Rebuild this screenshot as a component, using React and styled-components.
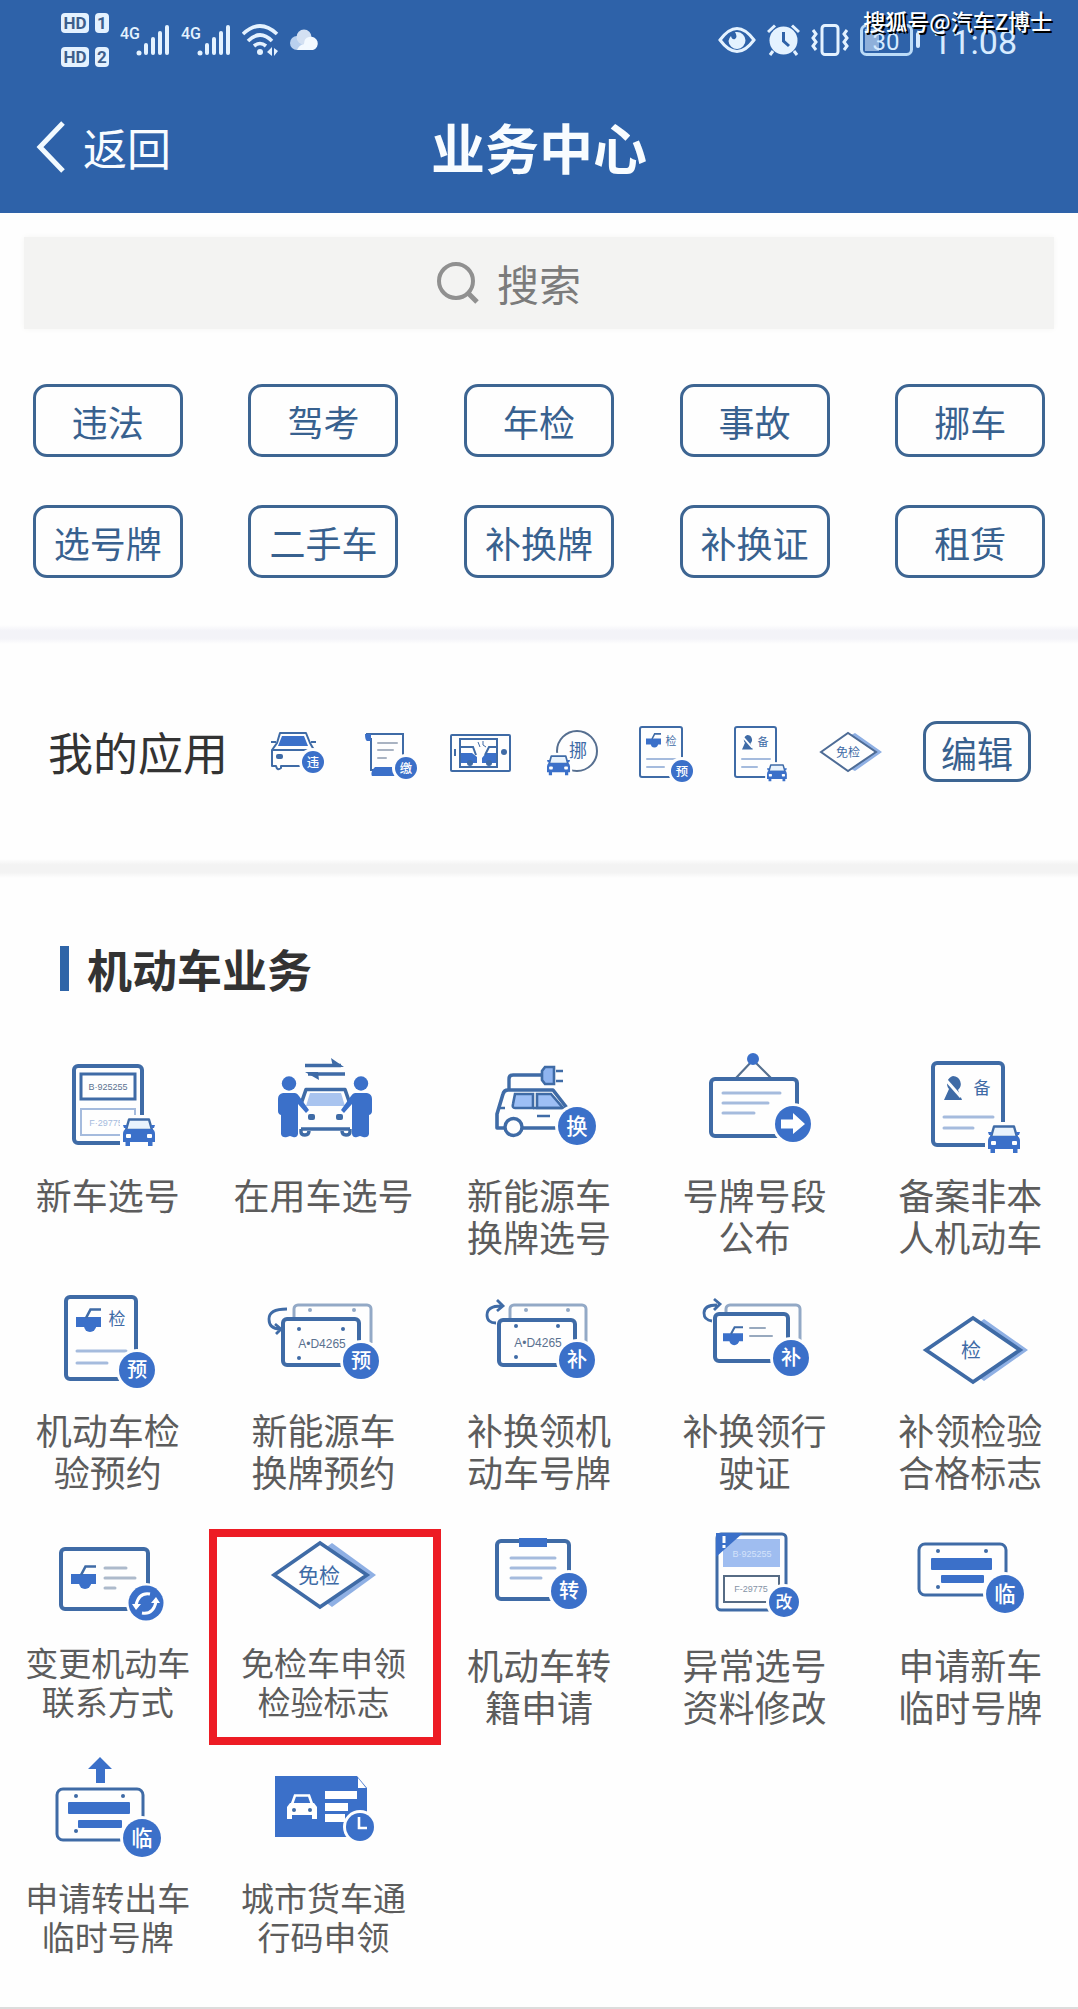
import React, { useState } from 'react'
import styled, { createGlobalStyle } from 'styled-components'

const BLUE = '#3b70c9'
const LINE = '#3f6ba6'
const PALE = '#a5bbdd'

/* ---------- small drawings shared by the icons ---------- */

// round badge with one character in it
function Badge({ x, y, r = 18, children }) {
  return (
    <g>
      <circle cx={x} cy={y} r={r + 3} fill="#fefefe" />
      <circle cx={x} cy={y} r={r} fill={BLUE} />
      <text x={x} y={y + r * 0.41} fontSize={r * 1.12} fontWeight="500" fill="#fff" textAnchor="middle">
        {children}
      </text>
    </g>
  )
}

// front of a car, 32 x 28
function Car({ x, y, s = 1 }) {
  return (
    <g transform={`translate(${x} ${y}) scale(${s})`}>
      <path d="M-3 -3H35V30H-3z" fill="#fefefe" />
      <path d="M6 1.5H26L29 12H3z" fill="#e9f3fd" stroke={LINE} strokeWidth="2.4" strokeLinejoin="round" />
      <path d="M3 11H29Q32 12 32 16V24H29.5V28H25V24H7V28H2.5V24H0V16Q0 12 3 11z" fill={BLUE} />
      <path d="M0 7H4V10H1zM32 7H28V10H31z" fill={BLUE} />
      <rect x="3" y="16" width="5" height="4" rx="1" fill="#fff" />
      <rect x="24" y="16" width="5" height="4" rx="1" fill="#fff" />
    </g>
  )
}

// half of a car seen from the side, 25 x 24
function HalfCar({ x, y, s = 1 }) {
  return (
    <g transform={`translate(${x} ${y}) scale(${s})`} fill={BLUE}>
      <path d="M0 9H25V19H20A6 6 0 0 1 9 19H0z" />
      <circle cx="14" cy="18" r="6" />
      <path d="M10 10L14.5 1.5H25" fill="none" stroke={LINE} strokeWidth="2.6" />
    </g>
  )
}

// person with a diagonal cut, 18 x 24
function Person({ x, y, s = 1 }) {
  return (
    <g transform={`translate(${x} ${y}) scale(${s})`}>
      <path d="M9 0A8 8 0 0 1 14 14L18 24H0L5 13A8 8 0 0 1 9 0z" fill={LINE} />
      <path d="M2 4L17 21" stroke="#fefefe" strokeWidth="3" />
    </g>
  )
}

function Lines({ x, rows, w = 3, color = PALE }) {
  return rows.map(([y, end]) => (
    <path key={y} d={`M${x} ${y}H${end}`} stroke={color} strokeWidth={w} strokeLinecap="round" />
  ))
}

function Frame({ x, y, w, h, color = LINE, sw = 4, rx = 4 }) {
  return <rect x={x} y={y} width={w} height={h} rx={rx} fill="#fefefe" stroke={color} strokeWidth={sw} />
}

function Dots({ points, color = LINE }) {
  return points.map(([x, y]) => <circle key={`${x}-${y}`} cx={x} cy={y} r="2" fill={color} />)
}

function Mark({ x, y, size, weight = 400, fill = LINE, children }) {
  return (
    <text x={x} y={y} fontSize={size} fontWeight={weight} fill={fill} textAnchor="middle">
      {children}
    </text>
  )
}

// number on a licence plate
function PlateNo({ x, y, size = 9, fill = '#5b7290', children }) {
  return (
    <text x={x} y={y} fontSize={size} fontFamily="'Liberation Sans', sans-serif" fill={fill} textAnchor="middle">
      {children}
    </text>
  )
}

/* ---------- service icons, 120 x 112 ---------- */

const NewPlate = () => (
  <>
    <Frame x={26} y={18} w={68} h={77} />
    <Frame x={33} y={26} w={54} h={25} sw={3} rx={0} />
    <PlateNo x={60} y={42}>B·925255</PlateNo>
    <Frame x={33} y={61} w={54} h={26} sw={2} rx={0} color={PALE} />
    <PlateNo x={58} y={78} fill={PALE}>F·29775</PlateNo>
    <Car x={75} y={70} />
  </>
)

const SwapPlate = () => (
  <>
    <path d="M42 17.5H78M82 26H45" stroke={LINE} strokeWidth="3.6" />
    <path d="M68 10L81 19H70zM56 32L42 24H55z" fill={LINE} />
    <path d="M38 56L43 41.5H82L87 56" fill="none" stroke={LINE} strokeWidth="3.6" strokeLinejoin="round" />
    <path d="M47 45H78L82 58H43z" fill="#a9c4ef" />
    <path d="M38 81H87" stroke={LINE} strokeWidth="3.6" />
    <path d="M38 81V84Q38 87 42 87T46 83M79 83Q79 87 83 87T87 84V81" fill="none" stroke={LINE} strokeWidth="3.4" />
    <rect x="45" y="66" width="7" height="6" rx="2" fill={LINE} />
    <rect x="73" y="66" width="7" height="6" rx="2" fill={LINE} />
    <g fill={BLUE}>
      <circle cx="26" cy="35.5" r="7.2" />
      <circle cx="98" cy="35.5" r="7.2" />
      <path d="M20 45H32Q34 45 36 48L46 62L43 65L35 56V86Q34 90 30 89L27 88L24 89Q19 90 18 86V67Q15 66 15 63V51Q15 46 20 45z" />
      <path d="M104 45H92Q90 45 88 48L78 62L81 65L89 56V86Q90 90 94 89L97 88L100 89Q105 90 106 86V67Q109 66 109 63V51Q109 46 104 45z" />
    </g>
  </>
)

const EnergyCar = () => (
  <>
    <path d="M30 42V31Q30 27 34 27H63" fill="none" stroke={LINE} strokeWidth="3.4" />
    <path d="M66 19H75V36H66L63 32V23z" fill="#8fb4f0" stroke={LINE} strokeWidth="2.6" />
    <path d="M77 23H84M77 33H84" stroke={LINE} strokeWidth="2.6" />
    <path d="M26 80H18V66L24 46Q25 42 29 42H74L88 60Q96 63 96 68V80H43" fill="#fefefe" stroke={LINE} strokeWidth="3.6" strokeLinejoin="round" />
    <path d="M36 46H54V60H36Q33 60 34 56z" fill="#9dbff5" stroke={LINE} strokeWidth="2.6" />
    <path d="M58 46H72L84 60H58z" fill="#9dbff5" stroke={LINE} strokeWidth="2.6" />
    <path d="M19 60H26M54 60H88M58 68H71" stroke={LINE} strokeWidth="2.6" />
    <circle cx="34.5" cy="79" r="8.5" fill="#fefefe" stroke={LINE} strokeWidth="3.4" />
    <Badge x={98} y={78} r={19}>换</Badge>
  </>
)

const Board = () => (
  <>
    <path d="M41 30L58 12L76 30" fill="none" stroke="#56708f" strokeWidth="2.2" />
    <circle cx="58" cy="11" r="6" fill={BLUE} />
    <Frame x={16} y={31} w={86} h={57} />
    <Lines x={28} rows={[[45, 85], [55, 73], [65, 59]]} />
    <circle cx="98" cy="76" r="21" fill="#fefefe" />
    <circle cx="98" cy="76" r="18" fill={BLUE} />
    <path d="M86 71.5H98V65L110 76L98 86V80.5H86z" fill="#fff" />
  </>
)

const Record = () => (
  <>
    <Frame x={23} y={15} w={70} h={82} />
    <Person x={34} y={28} />
    <Mark x={72} y={46} size={17}>备</Mark>
    <Lines x={34} rows={[[69, 83], [80, 63]]} />
    <Car x={78} y={77} />
  </>
)

const CheckBooking = () => (
  <>
    <Frame x={18} y={14} w={70} h={82} />
    <HalfCar x={28} y={25} />
    <Mark x={69} y={42} size={17}>检</Mark>
    <Lines x={29} rows={[[68, 78], [80, 59]]} />
    <Badge x={89} y={87}>预</Badge>
  </>
)

const EnergyBooking = () => (
  <>
    <Frame x={31} y={22} w={77} h={50} color="#93a9c6" sw={3} />
    <Dots points={[[47, 27], [91, 27]]} color="#93a9c6" />
    <path d="M24 26Q6 26 6 36Q6 46 17 46M12 41L18 46L13 51" fill="none" stroke={LINE} strokeWidth="2.8" />
    <Frame x={20} y={36} w={76} h={46} />
    <Dots points={[[36, 46], [80, 46], [36, 75]]} />
    <rect x="97" y="60" width="14" height="16" fill="#fefefe" />
    <Badge x={98} y={78}>预</Badge>
    <PlateNo x={59} y={65} size={12}>A•D4265</PlateNo>
  </>
)

const PlateRenew = () => (
  <>
    <Frame x={31} y={22} w={76} h={50} color="#93a9c6" sw={3} />
    <Dots points={[[47, 27], [89, 27]]} color="#93a9c6" />
    <path d="M17 40Q8 40 8 32Q8 23 22 23M18 17L24 23L18 28" fill="none" stroke={LINE} strokeWidth="2.8" />
    <Frame x={20} y={37} w={76} h={45} />
    <Dots points={[[37, 43], [79, 43], [37, 74]]} />
    <rect x="97" y="60" width="14" height="16" fill="#fefefe" />
    <Badge x={98} y={77}>补</Badge>
    <PlateNo x={59} y={64} size={12}>A•D4265</PlateNo>
  </>
)

const LicenseRenew = () => (
  <>
    <Frame x={31} y={22} w={74} h={48} color="#93a9c6" sw={3} />
    <path d="M17 38Q9 37 9 30Q9 22 22 22M19 16L25 21L19 27" fill="none" stroke={LINE} strokeWidth="2.8" />
    <Frame x={20} y={31} w={73} h={47} />
    <HalfCar x={28} y={43} s={0.8} />
    <Lines x={55} rows={[[45, 70], [53, 77]]} w={2} color="#98a9be" />
    <rect x="96" y="58" width="14" height="14" fill="#fefefe" />
    <Badge x={96} y={75}>补</Badge>
  </>
)

const CheckMark = () => (
  <>
    <path d="M74 36L118 67L74 98L66 92L102 67L66 42z" fill="#8fb0e4" />
    <path d="M16 67L63 35L110 67L63 99z" fill="#fefefe" stroke={LINE} strokeWidth="3.8" />
    <Mark x={61} y={75} size={20}>检</Mark>
  </>
)

const Contact = () => (
  <>
    <Frame x={13} y={31} w={87} h={60} />
    <HalfCar x={23} y={47} />
    <Lines x={57} rows={[[50, 78], [60, 87], [70, 67]]} color="#adbacb" />
    <circle cx="98" cy="85" r="20" fill="#fefefe" />
    <circle cx="98" cy="85" r="17.5" fill={BLUE} />
    <path d="M102 76Q91 74 88 87M94 95Q105 97 108 84" fill="none" stroke="#fff" strokeWidth="3" />
    <path d="M84 86H93L88 92zM103 85H112L108 79z" fill="#fff" />
  </>
)

const FreeCheck = () => (
  <>
    <path d="M69 25L113 57L69 89L61 83L96 57L61 31z" fill="#8fb0e4" />
    <path d="M11 57L57 25L104 57L57 89z" fill="#fefefe" stroke={LINE} strokeWidth="3.6" />
    <Mark x={56} y={65} size={21}>免检</Mark>
  </>
)

const Transfer = () => (
  <>
    <Frame x={18} y={23} w={72} h={58} />
    <rect x="40" y="20" width="28" height="9" fill={BLUE} />
    <Lines x={32} rows={[[40, 76], [50, 76], [60, 62]]} />
    <Badge x={90} y={73}>转</Badge>
  </>
)

const DataFix = () => (
  <>
    <Frame x={22} y={16} w={69} h={76} sw={3} />
    <rect x="28" y="21" width="57" height="28" fill="#9fbdf0" />
    <PlateNo x={57} y={39} fill="#d4e2fa">B·925255</PlateNo>
    <Frame x={29} y={58} w={55} h={26} sw={2} rx={0} color="#566b84" />
    <PlateNo x={56} y={74} fill="#8593a6">F-29775</PlateNo>
    <path d="M21 15H48L21 39z" fill={BLUE} />
    <path d="M29 18V25M29 27V30" stroke="#fff" strokeWidth="3" />
    <Badge x={89} y={84} r={15}>改</Badge>
  </>
)

const TempPlate = () => (
  <>
    <Frame x={9} y={26} w={87} h={51} sw={3} rx={6} />
    <Dots points={[[28, 33], [76, 33], [28, 69]]} />
    <rect x="21" y="40" width="61" height="12" rx="1" fill={BLUE} />
    <rect x="31" y="57" width="43" height="8" rx="1" fill={BLUE} />
    <Badge x={95} y={76} r={19}>临</Badge>
  </>
)

const TempOut = () => (
  <>
    <path d="M52 4L64 16H57V30H48V16H40z" fill={BLUE} />
    <Frame x={9} y={36} w={86} h={51} sw={3} rx={6} />
    <Dots points={[[28, 43], [75, 43], [28, 78]]} />
    <rect x="20" y="49" width="62" height="12" rx="1" fill={BLUE} />
    <rect x="30" y="67" width="44" height="8" rx="1" fill={BLUE} />
    <Badge x={94} y={85} r={19}>临</Badge>
  </>
)

const TruckPass = () => (
  <>
    <path d="M12 23H94L104 35V84H12z" fill={BLUE} />
    <path d="M95 25L103 35H95z" fill="#fff" />
    <path d="M29 51L32 42.5H46L49 51" fill="none" stroke="#fff" strokeWidth="2.6" />
    <path d="M27 50H51L54 54V66H49V62H29V66H24V54z" fill="#fff" />
    <circle cx="31" cy="57" r="2" fill={LINE} />
    <circle cx="47" cy="57" r="2" fill={LINE} />
    <path d="M62 38H94V46H62zM62 50H85V58H62zM62 61H82V69H62z" fill="#fff" />
    <circle cx="97" cy="74" r="17" fill="#fefefe" />
    <circle cx="97" cy="74" r="14" fill={BLUE} />
    <path d="M96 64V75H104" fill="none" stroke="#fff" strokeWidth="2.6" />
  </>
)

/* ---------- my apps icons, 60 x 60 ---------- */

const Violation = () => (
  <>
    <path d="M4 28L9 21L12 11H38L42 21L46 28V44H13V46Q9 49 8 44H4z" fill="#fefefe" stroke={LINE} strokeWidth="2" strokeLinejoin="round" />
    <path d="M14 14H36L40 24H10z" fill={BLUE} />
    <path d="M4 28H46M3 20H8M43 20H48" stroke={LINE} strokeWidth="2" />
    <rect x="8" y="32" width="7" height="5" rx="2" fill={LINE} />
    <Badge x={45} y={40} r={11}>违</Badge>
  </>
)

const Payment = () => (
  <>
    <path d="M6 12H43V48H11V16" fill="#fefefe" stroke={LINE} strokeWidth="2" />
    <path d="M5 12H11V19H7Q5 18 5 12zM12 54Q10 50 15 45H36V54z" fill={BLUE} />
    <Lines x={18} rows={[[21, 37], [28, 33], [36, 26]]} w={2} color="#a9b3c2" />
    <Badge x={46} y={46} r={11}>缴</Badge>
  </>
)

const Accident = () => (
  <>
    <Frame x={-1} y={13} w={59} h={36} sw={2} rx={1} />
    <Frame x={8} y={17} w={37} h={28} sw={2} rx={0} />
    <path d="M9 31H20L25 35V41H9zM44 31H34L30 36V41H44z" fill={BLUE} />
    <path d="M9 25H21L24 33M44 25H37L33 33" fill="none" stroke={LINE} strokeWidth="2" />
    <circle cx="18" cy="41" r="3" fill={LINE} />
    <circle cx="37" cy="41" r="3" fill={LINE} />
    <path d="M26 20L28 25M31 19V23L34 25" fill="none" stroke={LINE} strokeWidth="1" />
    <path d="M3 27V34" stroke={LINE} strokeWidth="2" />
    <circle cx="52" cy="30" r="3" fill={LINE} />
  </>
)

const MoveCar = () => (
  <>
    <circle cx="33" cy="29" r="20" fill="#fefefe" stroke="#566f90" strokeWidth="2" />
    <Car x={3} y={33} s={0.72} />
    <Mark x={34} y={35} size={18}>挪</Mark>
  </>
)

const CheckSmall = () => (
  <>
    <Frame x={4} y={5} w={42} h={50} sw={2} rx={2} />
    <HalfCar x={10} y={11} s={0.6} />
    <Mark x={35} y={23} size={11}>检</Mark>
    <Lines x={11} rows={[[37, 40], [45, 28]]} w={2} />
    <Badge x={46} y={49} r={11}>预</Badge>
  </>
)

const RecordSmall = () => (
  <>
    <Frame x={7} y={5} w={41} h={50} sw={2} rx={2} />
    <Person x={14} y={13} s={0.6} />
    <Mark x={35} y={24} size={11}>备</Mark>
    <Lines x={14} rows={[[37, 42], [45, 29]]} w={2} />
    <Car x={39} y={42} s={0.62} />
  </>
)

const FreeSmall = () => (
  <>
    <path d="M35 11L62 30L35 49L29 46L52 30L29 14z" fill="#8fb0e4" />
    <path d="M1 30L28 11L56 30L28 49z" fill="#fefefe" stroke="#4e6c96" strokeWidth="2" />
    <Mark x={28} y={35} size={12}>免检</Mark>
  </>
)

/* ---------- status bar icons ---------- */

const Signal = () => (
  <svg width="50" height="36" viewBox="0 0 50 36" fill="#e4f2ff">
    <text x="0" y="17" fontSize="16" fontFamily="Roboto, sans-serif" fontWeight="500">4G</text>
    <circle cx="19" cy="31" r="2.5" />
    <rect x="24" y="21" width="4" height="12" rx="2" />
    <rect x="31" y="15" width="4" height="18" rx="2" />
    <rect x="38" y="9" width="4" height="24" rx="2" />
    <rect x="45" y="3" width="4" height="30" rx="2" />
  </svg>
)

const Wifi = () => (
  <svg width="37" height="32" viewBox="0 0 37 32" fill="none" stroke="#e4f2ff" strokeWidth="3.6">
    <path d="M1 10Q18 -6 35 10M6 17Q18 5 30 17M12 22Q18 17 24 22" />
    <circle cx="18" cy="28" r="3" fill="#e4f2ff" stroke="none" />
    <path d="M25 28L30 23V32zM32 24V32L36 27z" fill="#e4f2ff" stroke="none" />
  </svg>
)

const Cloud = () => (
  <svg width="30" height="22" viewBox="0 0 30 22">
    <circle cx="7" cy="14" r="7" fill="#b9d0ee" />
    <circle cx="14" cy="8" r="7.5" fill="#d3e0f2" />
    <path d="M7 21H23A6.5 6.5 0 1 0 19 8Q14 9 14 15Q9 16 7 21z" fill="#f3f9ff" />
  </svg>
)

const Eye = () => (
  <svg width="38" height="28" viewBox="0 0 38 28">
    <path d="M2 14Q19 -9 36 14Q19 37 2 14z" fill="none" stroke="#e4f2ff" strokeWidth="3" />
    <path d="M19 6A8.5 8.5 0 1 1 10.5 15Q11 12 13 10Q14 14 17 13Q20 11 17 6z" fill="#e4f2ff" />
  </svg>
)

const Alarm = () => (
  <svg width="33" height="32" viewBox="0 0 33 32">
    <circle cx="16.5" cy="16.5" r="14" fill="#e4f2ff" />
    <path d="M1 8L8 1.5M32 8L25 1.5M6 27L3 31M27 27L30 31" stroke="#e4f2ff" strokeWidth="3" />
    <path d="M16.5 8V17L22 22" fill="none" stroke="#2f62a8" strokeWidth="3" />
  </svg>
)

const Vibrate = () => (
  <svg width="38" height="32" viewBox="0 0 38 32" fill="none" stroke="#e4f2ff" strokeWidth="3">
    <rect x="11" y="1.5" width="16" height="29" rx="3" />
    <path d="M2 6L5 10L2 14L5 18L2 22L5 26M36 6L33 10L36 14L33 18L36 22L33 26" />
  </svg>
)

const Battery = () => (
  <svg width="61" height="32" viewBox="0 0 61 32">
    <rect x="1.5" y="1.5" width="50" height="29" rx="5" fill="none" stroke="#bcdcf8" strokeWidth="3" />
    <rect x="5" y="5" width="14" height="22" fill="#8fb0da" />
    <rect x="56" y="8" width="4" height="16" rx="2" fill="#d7ebff" />
    <text x="26" y="26" fontSize="24" fontFamily="Roboto, sans-serif" fill="#d7ebff" textAnchor="middle">30</text>
  </svg>
)

/* ---------- data ---------- */

const tags = ['违法', '驾考', '年检', '事故', '挪车', '选号牌', '二手车', '补换牌', '补换证', '租赁']

const myApps = [
  { id: 'violation', Icon: Violation },
  { id: 'payment', Icon: Payment },
  { id: 'accident', Icon: Accident },
  { id: 'move', Icon: MoveCar },
  { id: 'check', Icon: CheckSmall },
  { id: 'record', Icon: RecordSmall },
  { id: 'free', Icon: FreeSmall },
]

const services = [
  { name: '新车选号', Icon: NewPlate },
  { name: '在用车选号', Icon: SwapPlate },
  { name: '新能源车\n换牌选号', Icon: EnergyCar },
  { name: '号牌号段\n公布', Icon: Board },
  { name: '备案非本\n人机动车', Icon: Record },
  { name: '机动车检\n验预约', Icon: CheckBooking },
  { name: '新能源车\n换牌预约', Icon: EnergyBooking },
  { name: '补换领机\n动车号牌', Icon: PlateRenew },
  { name: '补换领行\n驶证', Icon: LicenseRenew },
  { name: '补领检验\n合格标志', Icon: CheckMark },
  { name: '变更机动车\n联系方式', Icon: Contact, small: true },
  { name: '免检车申领\n检验标志', Icon: FreeCheck, small: true, marked: true },
  { name: '机动车转\n籍申请', Icon: Transfer },
  { name: '异常选号\n资料修改', Icon: DataFix },
  { name: '申请新车\n临时号牌', Icon: TempPlate },
  { name: '申请转出车\n临时号牌', Icon: TempOut, small: true },
  { name: '城市货车通\n行码申领', Icon: TruckPass, small: true },
]

export default function App() {
  const [keyword, setKeyword] = useState('')

  return (
    <Page>
      <Global />
      <Header>
        <StatusBar>
          <StatusGroup>
            <SimGrid>
              <SimBadge>HD</SimBadge>
              <SimBadge>1</SimBadge>
              <SimBadge>HD</SimBadge>
              <SimBadge>2</SimBadge>
            </SimGrid>
            <Signal />
            <Signal />
            <Wifi />
            <Cloud />
          </StatusGroup>
          <StatusGroup>
            <Eye />
            <Alarm />
            <Vibrate />
            <Battery />
            <Clock>11:08</Clock>
          </StatusGroup>
        </StatusBar>
        <NavBar>
          <BackButton type="button">
            <svg width="29" height="52" viewBox="0 0 29 52" fill="none" stroke="#f2faff" strokeWidth="5">
              <path d="M27 2L4 26L27 50" />
            </svg>
            返回
          </BackButton>
          <Title>业务中心</Title>
        </NavBar>
        <Watermark>搜狐号@汽车Z博士</Watermark>
      </Header>

      <SearchBox>
        <svg width="42" height="42" viewBox="0 0 42 42" fill="none" stroke="#909090" strokeWidth="4">
          <circle cx="19" cy="19" r="17" />
          <path d="M31 31L40 40" strokeWidth="5" />
        </svg>
        <SearchInput
          type="text"
          name="keyword"
          aria-label="搜索"
          placeholder="搜索"
          value={keyword}
          onChange={e => setKeyword(e.target.value)}
        />
      </SearchBox>

      <TagGrid>
        {tags.map(tag => (
          <OutlineButton type="button" key={tag}>{tag}</OutlineButton>
        ))}
      </TagGrid>

      <Divider $tint="#f3f3f8" />

      <MyApps>
        <MyAppsTitle>我的应用</MyAppsTitle>
        <AppList>
          {myApps.map(({ id, Icon }) => (
            <AppLink href={`#${id}`} key={id}>
              <AppIcon viewBox="0 0 60 60"><Icon /></AppIcon>
            </AppLink>
          ))}
        </AppList>
        <EditButton type="button">编辑</EditButton>
      </MyApps>

      <Divider $tint="#f3f3f3" />

      <Section>
        <SectionTitle>机动车业务</SectionTitle>
        <ServiceGrid>
          {services.map(({ name, Icon, small, marked }) => (
            <Service href="#" key={name} $marked={marked}>
              <ServiceIcon viewBox="0 0 120 112"><Icon /></ServiceIcon>
              <ServiceName $small={small}>{name}</ServiceName>
            </Service>
          ))}
        </ServiceGrid>
      </Section>
    </Page>
  )
}

/* ---------- styles ---------- */

const Global = createGlobalStyle`
  * {
    box-sizing: border-box;
  }

  body {
    margin: 0;
    background: #fefefe;
  }

  body, button, input {
    font-family: "Noto Sans CJK SC", sans-serif;
  }

  svg {
    display: block;
    flex-shrink: 0;
  }
`

const Page = styled.div`
  border-bottom: 2px solid #dcdcdc;
  background: #fefefe;
`

const Header = styled.header`
  position: relative;
  background: #2e62a9;
  color: #f8fcff;
`

const StatusBar = styled.div`
  display: flex;
  justify-content: space-between;
  height: 80px;
  padding: 0 61px;
`

const StatusGroup = styled.div`
  display: flex;
  align-items: center;
  gap: 11px;
`

const SimGrid = styled.div`
  display: grid;
  grid-template-columns: 28px 14px;
  gap: 14px 6px;
`

const SimBadge = styled.span`
  height: 20px;
  border-radius: 4px;
  background: #e4f2ff;
  color: #3d5f8c;
  font: 700 17px/20px Roboto, sans-serif;
  text-align: center;
`

const Clock = styled.span`
  padding-top: 4px;
  color: #d7ebff;
  font: 400 34px/40px Roboto, sans-serif;
`

const Watermark = styled.div`
  position: absolute;
  top: 4px;
  right: 26px;
  color: #fff;
  font-size: 22px;
  line-height: 32px;
  font-weight: 500;
  text-shadow: 2px 2px 0 #000;
`

const NavBar = styled.div`
  display: grid;
  grid-template-columns: 1fr auto 1fr;
  align-items: center;
  height: 133px;
  padding: 0 36px;
`

const BackButton = styled.button`
  display: flex;
  align-items: center;
  gap: 18px;
  padding: 0;
  border: none;
  background: none;
  color: inherit;
  font-size: 44px;
  line-height: 60px;
`

const Title = styled.h1`
  margin: 0;
  font-size: 54px;
  line-height: 72px;
  font-weight: 700;
`

const SearchBox = styled.label`
  display: flex;
  align-items: center;
  justify-content: center;
  gap: 18px;
  height: 92px;
  margin: 24px 24px 55px;
  padding-right: 60px;
  background: #f3f3f2;
  box-shadow: 0 0 6px #f6f6f4;
`

const SearchInput = styled.input`
  width: 2em;
  padding: 0;
  border: none;
  outline: none;
  background: none;
  color: #555;
  font-size: 42px;
  line-height: 60px;

  &::placeholder {
    color: #7b7b7b;
    opacity: 1;
  }
`

const TagGrid = styled.div`
  display: grid;
  grid-template-columns: repeat(5, 1fr);
  justify-items: center;
  row-gap: 48px;
  padding-bottom: 47px;
`

const OutlineButton = styled.button`
  width: 150px;
  height: 73px;
  padding: 0;
  border: 3px solid #3d6592;
  border-radius: 14px;
  background: #fefefe;
  color: #38618f;
  font-size: 36px;
  line-height: 42px;
`

const EditButton = styled(OutlineButton)`
  width: 108px;
  height: 61px;
`

const Divider = styled.div`
  height: 19px;
  background: linear-gradient(#fefefe, ${p => p.$tint} 30%, ${p => p.$tint} 70%, #fefefe);
`

const MyApps = styled.section`
  display: flex;
  align-items: center;
  height: 215px;
  padding: 0 47px 0 48px;
`

const MyAppsTitle = styled.h2`
  margin: 0 24px 0 0;
  color: #333;
  font-size: 45px;
  line-height: 60px;
  font-weight: 400;
`

const AppList = styled.div`
  display: grid;
  flex: 1;
  grid-template-columns: repeat(7, 1fr);
  justify-items: center;
  margin-right: 27px;
`

const AppLink = styled.a`
  display: block;
`

const AppIcon = styled.svg`
  width: 60px;
  height: 60px;
  overflow: visible;
`

const Section = styled.section`
  padding: 68px 0 42px;
`

const SectionTitle = styled.h2`
  margin: 0 0 57px 60px;
  padding-left: 18px;
  border-left: 9px solid #2f65a8;
  color: #333;
  font-size: 45px;
  line-height: 45px;
  font-weight: 700;
`

const ServiceGrid = styled.div`
  display: grid;
  grid-template-columns: repeat(5, 1fr);
  row-gap: 23px;
`

const Service = styled.a`
  position: relative;
  display: flex;
  flex-direction: column;
  align-items: center;
  gap: 13px;
  min-height: 212px;
  text-decoration: none;

  /* red frame around the highlighted service */
  &::after {
    content: ${p => (p.$marked ? '""' : 'none')};
    position: absolute;
    inset: 11px -10px -15px -7px;
    border: 8px solid #ed1c24;
  }
`

const ServiceIcon = styled.svg`
  width: 120px;
  height: 112px;
`

const ServiceName = styled.span`
  color: #5c5c5c;
  font-size: ${p => (p.$small ? 33 : 36)}px;
  line-height: ${p => (p.$small ? 39 : 42)}px;
  text-align: center;
  white-space: pre-line;
`
